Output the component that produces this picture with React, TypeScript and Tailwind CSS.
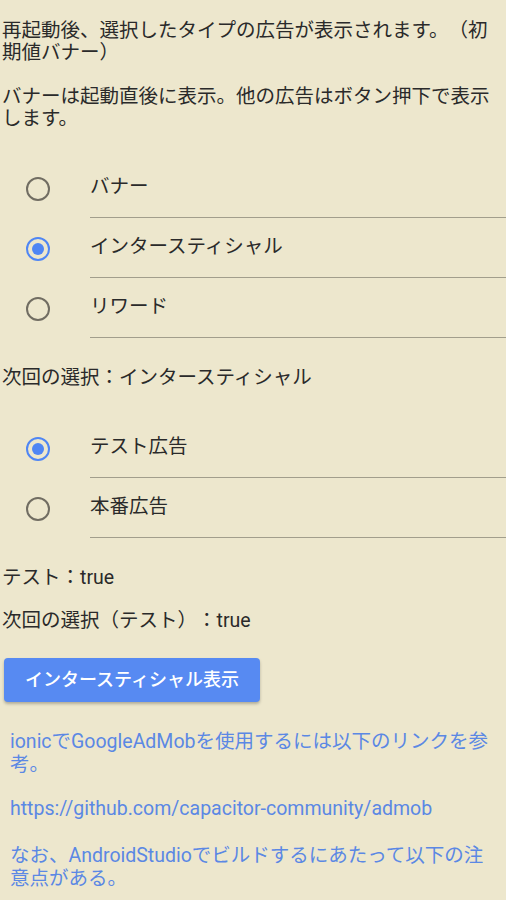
import { useState } from "react";

const AD_TYPES = [
  { value: "banner", label: "バナー" },
  { value: "interstitial", label: "インタースティシャル" },
  { value: "reward", label: "リワード" },
];

const MODES = [
  { value: "test", label: "テスト広告" },
  { value: "prod", label: "本番広告" },
];

function Radio({ checked }: { checked: boolean }) {
  return (
    <span
      className={
        checked
          ? "flex h-[24px] w-[24px] items-center justify-center rounded-full border-[2.5px] border-[#4f86f4]"
          : "flex h-[24px] w-[24px] items-center justify-center rounded-full border-[2.5px] border-[#716d62]"
      }
    >
      {checked && <span className="h-[12px] w-[12px] rounded-full bg-[#4f86f4]" />}
    </span>
  );
}

function RadioList({
  options,
  value,
  onChange,
}: {
  options: { value: string; label: string }[];
  value: string;
  onChange: (v: string) => void;
}) {
  return (
    <div>
      {options.map((o) => (
        <button
          key={o.value}
          type="button"
          onClick={() => onChange(o.value)}
          className="flex h-[60px] w-full items-stretch text-left"
        >
          <span className="flex w-[90px] shrink-0 items-center pl-[26px] pt-[2px]">
            <Radio checked={value === o.value} />
          </span>
          <span className="flex flex-1 items-center border-b border-[#a29e8c] pb-[2px]">
            {o.label}
          </span>
        </button>
      ))}
    </div>
  );
}

export default function App() {
  const [adType, setAdType] = useState("interstitial");
  const [mode, setMode] = useState("test");
  const label = AD_TYPES.find((t) => t.value === adType)?.label ?? "";
  const isTest = mode === "test" ? "true" : "false";

  return (
    <div className="min-h-[900px] bg-[#ede7cd] pb-6 font-['Roboto','Noto_Sans_CJK_JP',sans-serif] text-[19.5px] leading-[22px] text-[#2a2a2a] [text-spacing-trim:space-all]">
      <p className="mt-0 pt-[20px] pl-[2px]">
        再起動後、選択したタイプの広告が表示されます。（初期値バナー）
      </p>
      <p className="mt-[22px] pl-[2px]">
        バナーは起動直後に表示。他の広告はボタン押下で表示します。
      </p>

      <div className="mt-[28px]">
        <RadioList options={AD_TYPES} value={adType} onChange={setAdType} />
      </div>

      <p className="mt-[29px] pl-[2px]">次回の選択：{label}</p>

      <div className="mt-[29px]">
        <RadioList options={MODES} value={mode} onChange={setMode} />
      </div>

      <p className="mt-[29px] pl-[2px]">テスト：true</p>
      <p className="mt-[21px] pl-[2px]">次回の選択（テスト）：{isTest}</p>

      <button
        type="button"
        className="ml-[4px] mt-[26px] h-[44px] w-[256px] rounded-[4px] bg-[#578af2] text-[18px] font-medium text-white shadow-[0_2px_3px_rgba(0,0,0,0.25)]"
      >
        {label}表示
      </button>

      <div className="pl-[10px] pr-[6px] text-[#5b88e4] leading-[23px]">
        <p className="mt-[28px]">
          ionicでGoogleAdMobを使用するには以下のリンクを参考。
        </p>
        <p className="mt-[21px]">https://github.com/capacitor-community/admob</p>
        <p className="mt-[24px]">
          なお、AndroidStudioでビルドするにあたって以下の注意点がある。
        </p>
      </div>
    </div>
  );
}
